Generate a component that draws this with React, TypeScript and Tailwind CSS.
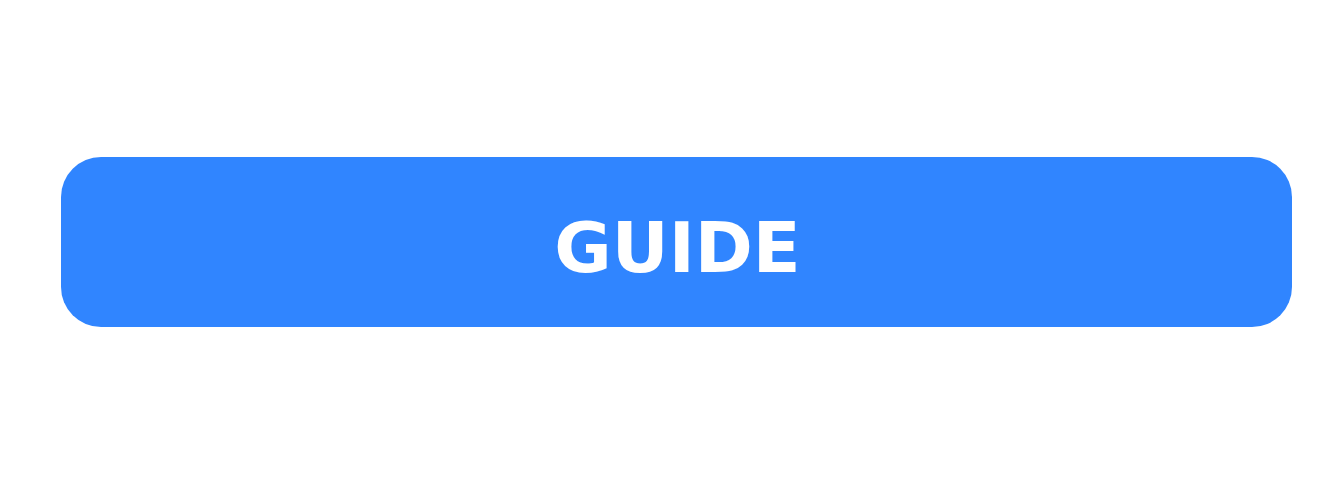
export default function App() {
  return (
    <div className="h-[478px] w-[1328px] bg-white pl-[61px] pr-[36px] pt-[157px]">
      <button
        className="flex h-[170px] w-full items-center justify-center rounded-[40px] bg-[#3085ff] pl-[2px] pt-[12px] text-[70px] font-bold leading-none text-white"
        style={{ fontFamily: '"DejaVu Sans", Inter, sans-serif' }}
      >
        GUIDE
      </button>
    </div>
  )
}
